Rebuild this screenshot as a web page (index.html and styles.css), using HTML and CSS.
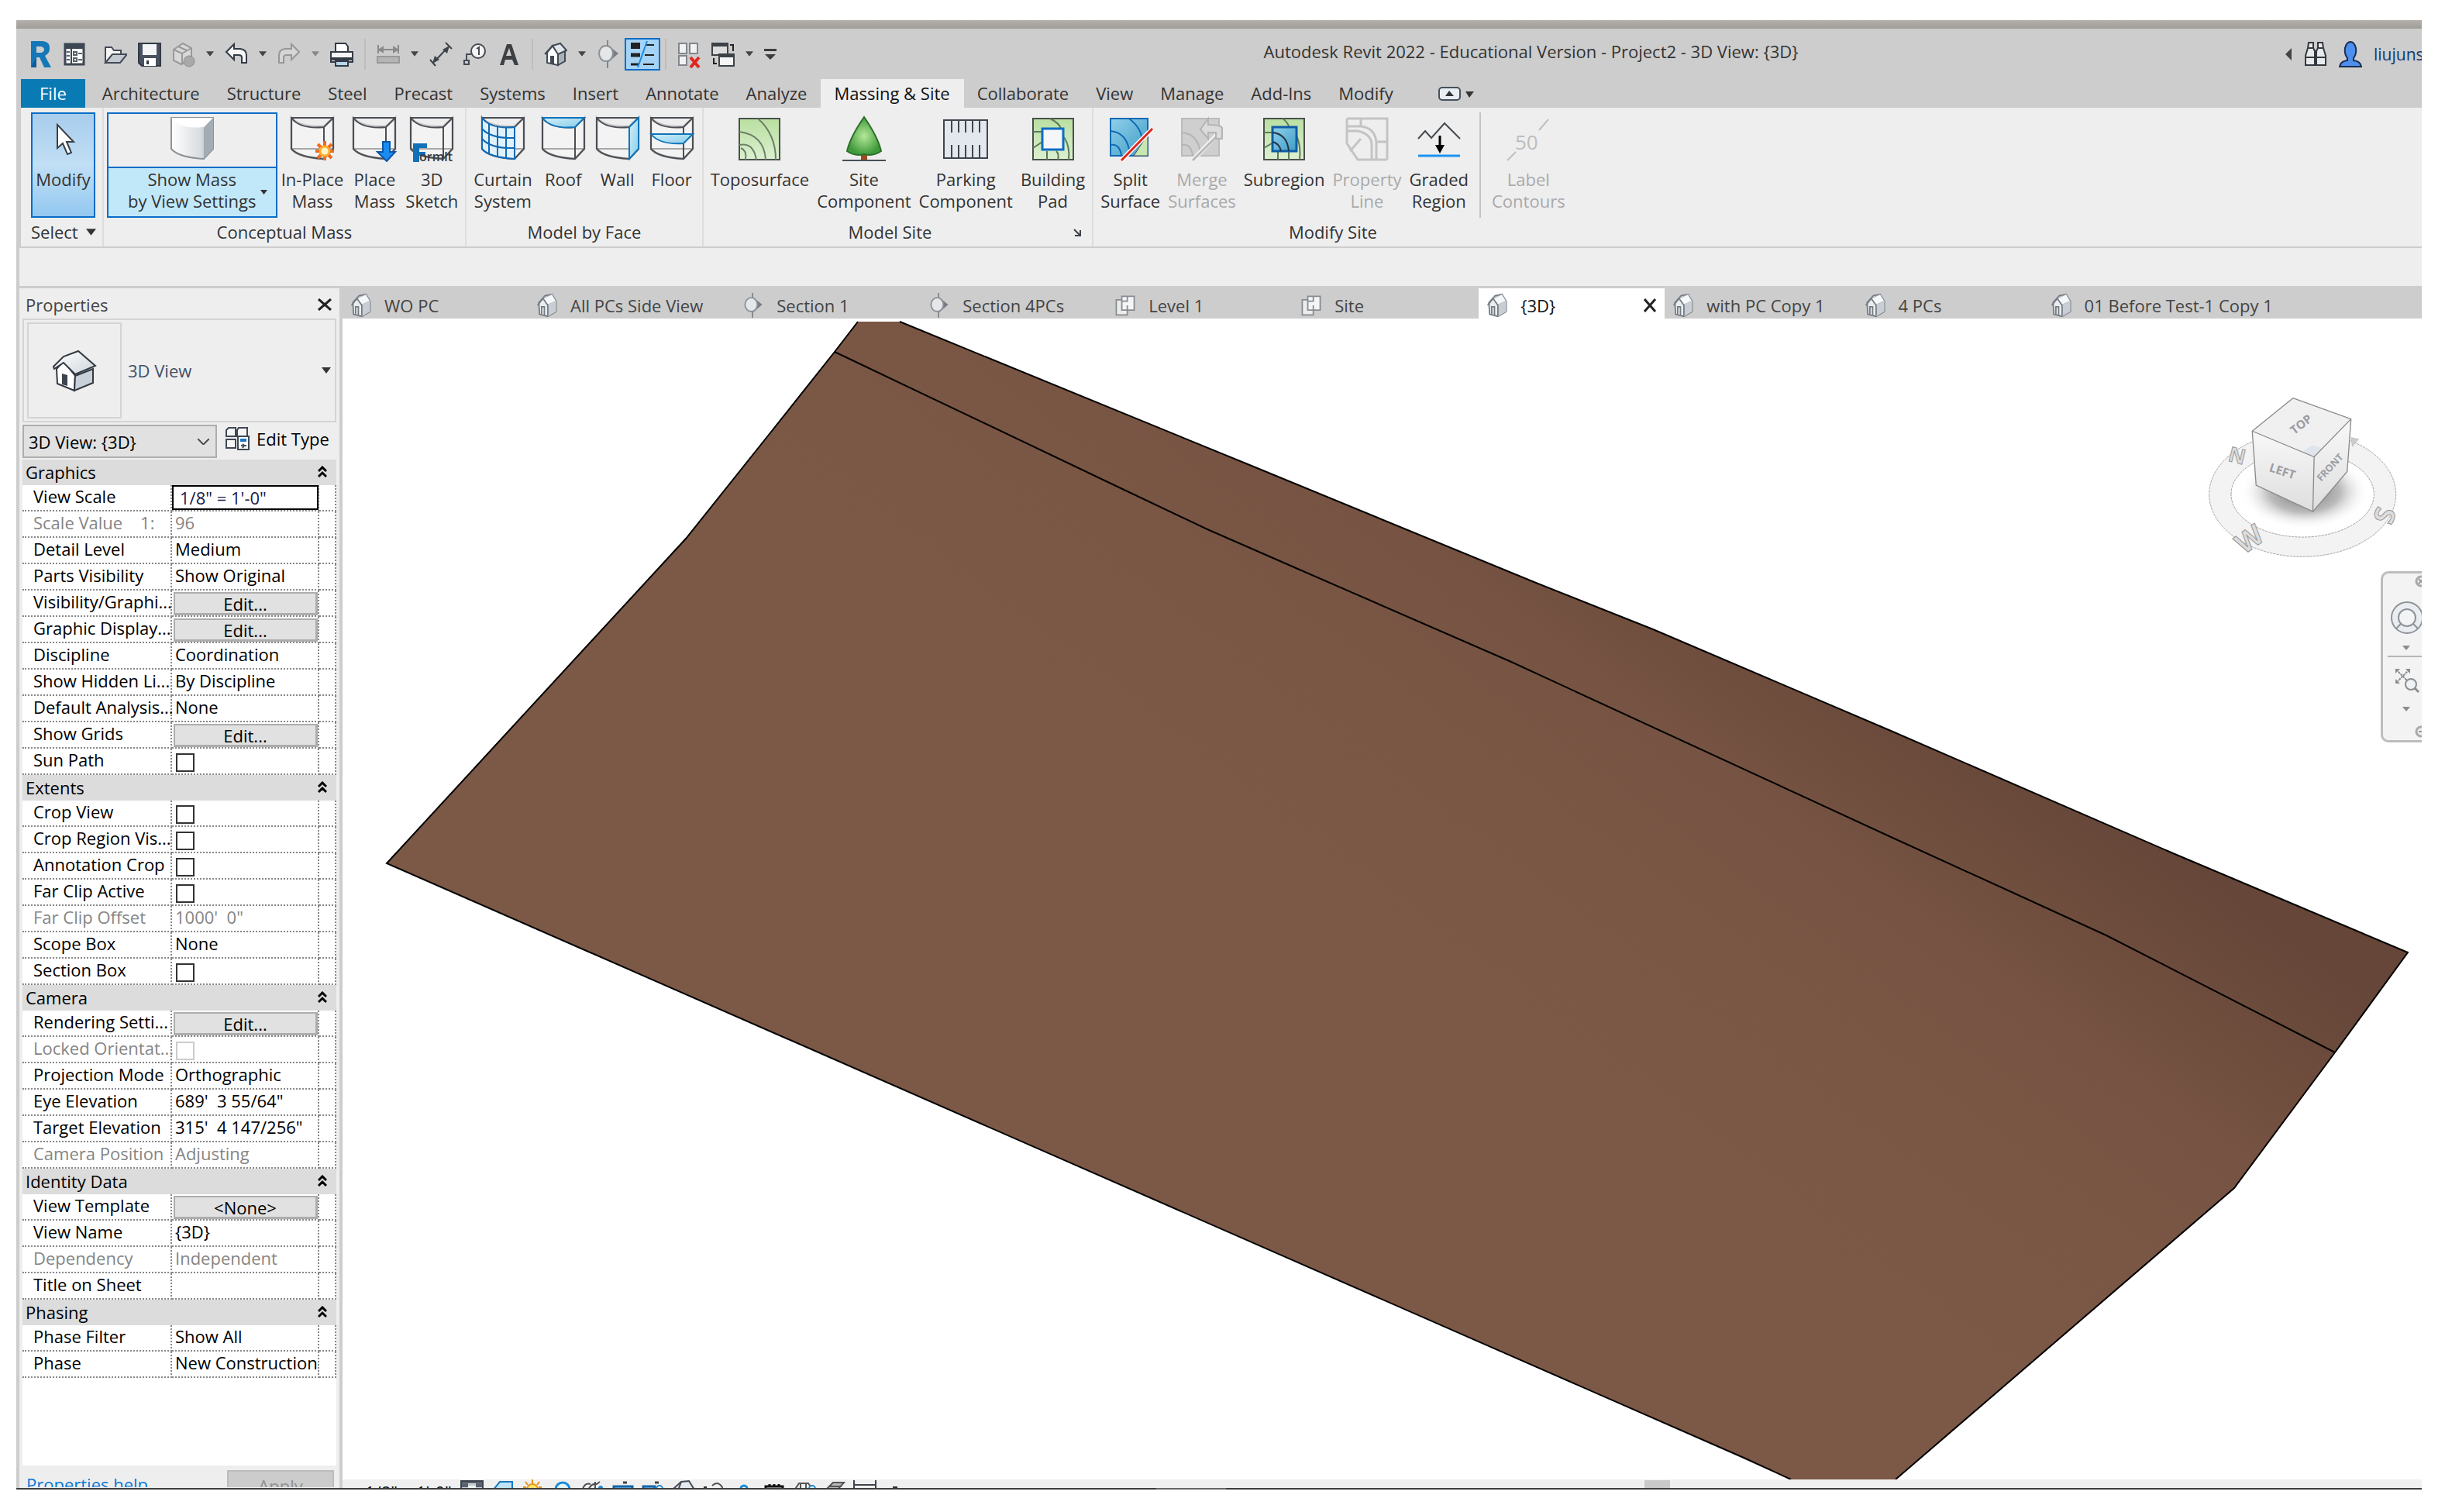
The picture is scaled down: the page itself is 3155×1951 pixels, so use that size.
FILE: index.html
```html
<!DOCTYPE html>
<html lang="en">
<head>
<meta charset="utf-8">
<title>Autodesk Revit 2022 - Educational Version - Project2 - 3D View: {3D}</title>
<link rel="stylesheet" href="styles.css">
</head>
<body>
<svg class="sprite" aria-hidden="true">
  <defs>
    <linearGradient id="g-roof" x1="0" y1="0" x2="1" y2="1"><stop offset="0" stop-color="#ffffff"/><stop offset="1" stop-color="#cfd6dc"/></linearGradient>
    <linearGradient id="g-solid" x1="0" y1="0" x2="1" y2="0"><stop offset="0" stop-color="#ffffff"/><stop offset=".7" stop-color="#d9dde0"/><stop offset="1" stop-color="#9aa3ac"/></linearGradient>
    <linearGradient id="g-sky" x1="0" y1="0" x2="1" y2="1"><stop offset="0" stop-color="#d3effa"/><stop offset="1" stop-color="#86cdea"/></linearGradient>
    <linearGradient id="g-green" x1="0" y1="0" x2="0" y2="1"><stop offset="0" stop-color="#b9dfa0"/><stop offset="1" stop-color="#dcf0d0"/></linearGradient>
    <linearGradient id="g-blue" x1="0" y1="0" x2="1" y2="1"><stop offset="0" stop-color="#8fd0ea"/><stop offset="1" stop-color="#3f9cc6"/></linearGradient>
    <radialGradient id="g-tree"><stop offset="0" stop-color="#b5e89a"/><stop offset="1" stop-color="#3f9a3a"/></radialGradient>
    <symbol id="i-house" viewBox="0 0 30 36">
      <path d="M3 14 12 4 22 2 28 12V27L16 34 4 31Z" fill="#e9edf0" stroke="#747b83" stroke-width="2"/>
      <path d="M9 8 22 2 28 12 16 17Z" fill="#f5f7f8" stroke="#9aa1a8"/>
      <path d="M16 17 28 12V27L16 34Z" fill="#c9ced4"/>
      <path d="M1 18 9 8 16 18V33M7 31V20h4V32" fill="none" stroke="#747b83" stroke-width="2"/>
    </symbol>
    <symbol id="i-section" viewBox="0 0 30 36">
      <path d="M14 0v36" stroke="#80868c" stroke-width="2"/><path d="M14 6 28 17 14 29Z" fill="#767d85"/>
      <ellipse cx="12" cy="17" rx="9" ry="10" fill="#e4e6e8" stroke="#8b9198" stroke-width="2"/>
    </symbol>
    <symbol id="i-plan" viewBox="0 0 30 36">
      <path d="M2 10h16V32H2Z" fill="#ececec" stroke="#858c93" stroke-width="2"/>
      <path d="M10 5h18V25H10Z" fill="#f5f5f5" stroke="#858c93" stroke-width="2"/><path d="M10 12h8v-7M18 25v-7" fill="none" stroke="#858c93" stroke-width="2"/>
    </symbol>
    <symbol id="i-mass" viewBox="0 0 60 60">
      <path d="M3 3Q14 16 45 14L57 3V43L45 56Q12 54 3 43Z" fill="#f3f3f3" stroke="#c8c8c8" stroke-width="3"/>
      <path d="M3 43H57" stroke="#a8a8a8" stroke-width="2"/>
      <path d="M3 3H57V43L45 56Q12 54 3 43ZM3 3Q14 18 45 15L57 3M45 15V56" fill="none" stroke="#4b4f54" stroke-width="2"/>
    </symbol>
    <symbol id="i-chev" viewBox="0 0 12 16"><path d="M1 7 6 2 11 7M1 14 6 9 11 14" fill="none" stroke="#000" stroke-width="3"/></symbol>
    <symbol id="i-down" viewBox="0 0 12 8"><path d="M0 0H12L6 8Z" fill="currentColor"/></symbol>
  </defs>
</svg>

<div class="app">
  <div class="frame-top"></div>
  <header class="titlebar">
    <div class="qat">
      <svg class="ico" viewBox="0 0 30 36"><path d="M3 1H18Q28 2 27 11 27 17 21 20L29 35H20L14 22H10V35H3Z" fill="#1478b8"/><path d="M10 8h6q4 1 4 4t-4 4h-6Z" fill="#cdcdcd"/><path d="M10 22 3 35h7Z" fill="#0d5b94"/></svg>
      <button class="tool" aria-label="Home"><svg class="ico" viewBox="0 0 30 36"><path d="M3 5H27V31H3Z" fill="#fff" stroke="#3d4752" stroke-width="3"/><path d="M3 5H27V11H3Z" fill="#3d4752"/><path d="M11 11V31" stroke="#3d4752" stroke-width="2"/><path d="M5 15h4M5 20h4M5 25h4M14 15h4v4h-4ZM14 23h4v4h-4ZM20 17h5M20 25h5" stroke="#56616c" stroke-width="2" fill="none"/></svg></button>
      <button class="tool tool-first" aria-label="Open"><svg class="ico" viewBox="0 0 30 36"><path d="M2 29V9H10L13 13H22V18" fill="#f4f4f4" stroke="#424a55" stroke-width="2"/><path d="M2 29 11 18H30L21 29Z" fill="#c3cad2" stroke="#424a55" stroke-width="2"/></svg></button>
      <button class="tool" aria-label="Save"><svg class="ico" viewBox="0 0 30 36"><path d="M1 4H29V33H5L1 29Z" fill="#4a525f" stroke="#333a45" stroke-width="2"/><path d="M6 5H24V19H6Z" fill="#f4f5f7"/><path d="M8 23H23V33H8Z" fill="#fff"/><path d="M11 26h3v5h-3Z" fill="#333a45"/></svg></button>
      <button class="tool" aria-label="Synchronize"><svg class="ico" viewBox="0 0 30 36"><path d="M2 12 14 4 25 10V24L12 31 2 26Z" fill="#d8d8d8" stroke="#999" stroke-width="2"/><path d="M2 12 13 17 25 10M13 17V31M8 8 19 13" fill="none" stroke="#999" stroke-width="2"/><circle cx="22" cy="27" r="7" fill="#a9a9a9" stroke="#8e8e8e"/></svg></button>
      <svg class="caret"><use href="#i-down"/></svg>
      <button class="tool" aria-label="Undo"><svg class="ico" viewBox="0 0 30 36"><path d="M2 15 12 5V11H20Q28 12 28 19V29H22V22Q22 19 18 19H12V25Z" fill="#f6f6f6" stroke="#333b45" stroke-width="2"/></svg></button>
      <svg class="caret"><use href="#i-down"/></svg>
      <button class="tool" aria-label="Redo"><svg class="ico" viewBox="0 0 30 36"><path d="M28 15 18 5V11H10Q2 12 2 19V29H8V22Q8 19 12 19H18V25Z" fill="#d5d5d5" stroke="#979797" stroke-width="2"/></svg></button>
      <svg class="caret dim"><use href="#i-down"/></svg>
      <button class="tool" aria-label="Print"><svg class="ico" viewBox="0 0 30 36"><path d="M7 4H20L23 8V15H7Z" fill="#fff" stroke="#333b45" stroke-width="2"/><path d="M1 15H29V28H1Z" fill="#f5f5f5" stroke="#333b45" stroke-width="2"/><path d="M1 22H29V26H1Z" fill="#333b45"/><path d="M7 27H23V33H7Z" fill="#b9d6e8" stroke="#333b45" stroke-width="2"/></svg></button>
      <span class="sep"></span>
      <button class="tool" aria-label="Measure"><svg class="ico" viewBox="0 0 30 36"><path d="M2 6V17M28 6V17M3 12H27M3 12l5-3v6ZM27 12l-5-3v6Z" stroke="#8a8a8a" stroke-width="2" fill="#8a8a8a"/><path d="M1 21H29V29H1Z" fill="#b5b5b5" stroke="#999" stroke-width="2"/></svg></button>
      <svg class="caret"><use href="#i-down"/></svg>
      <button class="tool" aria-label="Aligned Dimension"><svg class="ico" viewBox="0 0 30 36"><path d="M6 28 24 9M1 25 8 33M21 3 29 11" stroke="#3d434b" stroke-width="2"/><path d="M4 30 7 20 13 25ZM26 7 17 12 23 17Z" fill="#3d434b"/></svg></button>
      <button class="tool" aria-label="Tag by Category"><svg class="ico" viewBox="0 0 30 36"><circle cx="19" cy="14" r="9" fill="#f4f4f4" stroke="#444b54" stroke-width="2"/><path d="M17 11 20 9V19M10 18H4V26M1 26H7V31H1Z" fill="none" stroke="#444b54" stroke-width="2"/></svg></button>
      <button class="tool" aria-label="Text"><svg class="ico" viewBox="0 0 30 36"><path d="M3 32 12 5H18L27 32H22L19 25H10L8 32ZM11 20H18L15 10Z" fill="#3d4043" fill-rule="evenodd"/></svg></button>
      <span class="sep"></span>
      <button class="tool" aria-label="Default 3D View"><svg class="ico" viewBox="0 0 30 36"><path d="M4 16 11 7 18 17V32L4 29Z" fill="#fff" stroke="#414a55" stroke-width="2"/><path d="M18 17 27 13V27L18 32Z" fill="#a9b2bc" stroke="#414a55" stroke-width="2"/><path d="M11 7 21 4 29 13 18 18Z" fill="#e1e6eb" stroke="#414a55" stroke-width="2"/><path d="M1 18 11 7" stroke="#414a55" stroke-width="2"/><path d="M8 20h5v10h-5Z" fill="#414a55"/></svg></button>
      <svg class="caret"><use href="#i-down"/></svg>
      <button class="tool" aria-label="Section"><svg class="ico"><use href="#i-section"/></svg></button>
      <button class="tool tool-on" aria-label="Thin Lines" aria-pressed="true"><svg class="ico" viewBox="0 0 30 36"><path d="M0 7H12" stroke="#222" stroke-width="8"/><path d="M0 19H12" stroke="#222" stroke-width="5"/><path d="M0 31H10" stroke="#222" stroke-width="3"/><path d="M20 6H30M18 19H30M16 31H30" stroke="#222" stroke-width="2"/><path d="M21 1 9 35" stroke="#1c8ae0" stroke-width="2"/></svg></button>
      <span class="sep"></span>
      <button class="tool" aria-label="Close Inactive Views"><svg class="ico" viewBox="0 0 30 36"><path d="M2 4H12V17H2ZM16 4H26V17H16ZM2 20H12V32H2Z" fill="#f2f2f2" stroke="#81868c" stroke-width="2"/><path d="M17 22 28 35M28 22 17 35" stroke="#e1281f" stroke-width="4"/></svg></button>
      <button class="tool" aria-label="Switch Windows"><svg class="ico" viewBox="0 0 30 36"><path d="M1 4H21V19H1Z" fill="#ddd" stroke="#3d4248" stroke-width="2"/><path d="M1 6H21" stroke="#3d4248" stroke-width="4"/><path d="M10 18H29V33H10Z" fill="#f5f5f5" stroke="#3d4248" stroke-width="2"/><path d="M10 20H29" stroke="#3d4248" stroke-width="4"/><path d="M24 6H28V14M3 23V30H7" stroke="#222" stroke-width="2" fill="none"/></svg></button>
      <svg class="caret"><use href="#i-down"/></svg>
      <button class="tool tool-small" aria-label="Customize Quick Access Toolbar"><svg viewBox="0 0 16 16"><path d="M0 1H16V4H0ZM1 8H15L8 15Z" fill="#3d3d3d"/></svg></button>
    </div>
    <h1 class="title">Autodesk Revit 2022 - Educational Version - Project2 - 3D View: {3D}</h1>
    <div class="account">
      <svg class="back" viewBox="0 0 8 16"><path d="M8 0V16L0 8Z" fill="#444"/></svg>
      <button class="tool" aria-label="Search"><svg class="ico" viewBox="0 0 30 36"><path d="M6 3H12V10L14 14V32H2V20L5 10ZM24 3H18V10L16 14V32H28V20L25 10Z" fill="#e8eaec" stroke="#34393f" stroke-width="2"/><path d="M2 22H13M17 22H28M6 10h5M19 10h5M13 14h4" stroke="#34393f" stroke-width="2"/></svg></button>
      <button class="tool" aria-label="Account"><svg class="ico" viewBox="0 0 30 36"><path d="M1 34Q2 27 11 26V23Q7 18 8 10 10 2 15 2T22 10Q23 18 19 23V26Q28 27 29 34Z" fill="#4d8fec" stroke="#1b2c52" stroke-width="2"/></svg></button>
      <span class="user">liujuns</span>
    </div>
  </header>

  <nav class="tabs">
    <button class="tab tab-file">File</button>
    <button class="tab">Architecture</button>
    <button class="tab">Structure</button>
    <button class="tab">Steel</button>
    <button class="tab">Precast</button>
    <button class="tab">Systems</button>
    <button class="tab">Insert</button>
    <button class="tab">Annotate</button>
    <button class="tab">Analyze</button>
    <button class="tab tab-active">Massing &amp; Site</button>
    <button class="tab">Collaborate</button>
    <button class="tab">View</button>
    <button class="tab">Manage</button>
    <button class="tab">Add-Ins</button>
    <button class="tab">Modify</button>
    <button class="tab-toggle" aria-label="Minimize ribbon"><svg viewBox="0 0 46 18"><rect x="1" y="1" width="27" height="16" rx="4" fill="#e9eef3" stroke="#47505a" stroke-width="2"/><path d="M9 12H20L14 5ZM35 6H46L40 14Z" fill="#333"/></svg></button>
  </nav>

  <section class="ribbon">
    <div class="group">
      <div class="cmds">
        <button class="cmd cmd-modify"><svg class="big" viewBox="0 0 60 60"><path d="M22 12V42L29 36 35 50 40 48 34 34H43Z" fill="#fff" stroke="#3a4046" stroke-width="2"/></svg><span>Modify</span></button>
      </div>
      <button class="gname">Select <svg class="gcaret"><use href="#i-down"/></svg></button>
    </div>
    <div class="group">
      <div class="cmds">
        <button class="cmd cmd-show"><span class="show-top"><svg class="big" viewBox="0 0 60 60"><path d="M3 3H57V43L45 56Q12 54 3 43Z" fill="url(#g-solid)" stroke="#8d9299" stroke-width="2"/><path d="M45 16 57 3V43L45 56Z" fill="#a3abb3"/><path d="M3 3Q14 18 45 15L57 3Z" fill="#fff"/></svg></span><span class="show-label">Show Mass<br>by View Settings</span><svg class="show-caret"><use href="#i-down"/></svg></button>
        <button class="cmd"><svg class="big" viewBox="0 0 60 60"><use href="#i-mass"/><path d="M46 33V58M34 46H58M37 37 55 55M55 37 37 55" stroke="#f26a1b" stroke-width="4"/><circle cx="46" cy="46" r="6" fill="#fff6c8" stroke="#ffab2e" stroke-width="3"/></svg><span>In-Place<br>Mass</span></button>
        <button class="cmd"><svg class="big" viewBox="0 0 60 60"><use href="#i-mass"/><path d="M41 34H50V47H57L46 59 34 47H41Z" fill="#1c8df0" stroke="#0c56a8" stroke-width="2"/></svg><span>Place<br>Mass</span></button>
        <button class="cmd"><svg class="big" viewBox="0 0 60 60"><use href="#i-mass"/><path d="M6 36H24V42H14V47H22V52H14V60H6Z" fill="#1170b8"/><text x="14" y="59" class="formit">ormIt</text></svg><span>3D<br>Sketch</span></button>
      </div>
      <h2 class="gname">Conceptual Mass</h2>
    </div>
    <div class="group">
      <div class="cmds">
        <button class="cmd"><svg class="big" viewBox="0 0 60 60"><use href="#i-mass"/><path d="M3 3Q14 18 45 15V56Q12 54 3 43Z" fill="#dff2fb" stroke="#1169b5" stroke-width="2"/><path d="M3 17Q14 30 45 29M3 30Q14 43 45 42M12 11V50M23 15V54M34 15V55" fill="none" stroke="#1169b5" stroke-width="2"/></svg><span>Curtain<br>System</span></button>
        <button class="cmd"><svg class="big" viewBox="0 0 60 60"><use href="#i-mass"/><path d="M3 3H57L45 15Q14 18 3 3Z" fill="url(#g-sky)" stroke="#1273b8" stroke-width="2"/></svg><span>Roof</span></button>
        <button class="cmd"><svg class="big" viewBox="0 0 60 60"><use href="#i-mass"/><path d="M45 15 57 3V43L45 56Z" fill="url(#g-sky)" stroke="#1273b8" stroke-width="2"/></svg><span>Wall</span></button>
        <button class="cmd"><svg class="big" viewBox="0 0 60 60"><use href="#i-mass"/><path d="M3 24H57L45 36Q14 38 3 24Z" fill="url(#g-sky)" stroke="#1273b8" stroke-width="2"/></svg><span>Floor</span></button>
      </div>
      <h2 class="gname">Model by Face</h2>
    </div>
    <div class="group">
      <div class="cmds">
        <button class="cmd"><svg class="big" viewBox="0 0 60 60"><path d="M4 4H56V57H4Z" fill="url(#g-green)" stroke="#49504c" stroke-width="2"/><path d="M28 4Q51 24 51 57M4 21Q36 25 38 57M4 38Q22 34 26 57M12 57Q14 45 6 42" fill="none" stroke="#6d7f68" stroke-width="2"/></svg><span>Toposurface</span></button>
        <button class="cmd"><svg class="big" viewBox="0 0 60 60"><path d="M26 48H34V58H26Z" fill="#9c4d1e"/><path d="M2 58H58" stroke="#4a4f55" stroke-width="2"/><path d="M30 2Q48 28 52 46 42 53 30 50 18 53 8 46 12 28 30 2Z" fill="url(#g-tree)" stroke="#2c6e2b" stroke-width="2"/></svg><span>Site<br>Component</span></button>
        <button class="cmd"><svg class="big" viewBox="0 0 60 60"><path d="M2 6H58V55H2Z" fill="#e3e7ee" stroke="#3f454c" stroke-width="2"/><path d="M12 7V22M21 7V22M30 7V22M39 7V22M48 7V22M12 55V38M21 55V38M30 55V38M39 55V38M48 55V38" stroke="#3f454c" stroke-width="2"/></svg><span>Parking<br>Component</span></button>
        <button class="cmd"><svg class="big" viewBox="0 0 60 60"><path d="M4 4H56V57H4Z" fill="url(#g-green)" stroke="#49504c" stroke-width="2"/><path d="M26 4Q38 10 40 17M4 21H16M4 42 16 34M22 57V46M36 57Q38 50 34 46M50 57Q52 40 44 28" fill="none" stroke="#5c7a58" stroke-width="2"/><path d="M16 17H43V44H16Z" fill="#f4f6f8" stroke="#0f6cc4" stroke-width="3"/></svg><span>Building<br>Pad</span></button>
      </div>
      <div class="gfoot"><h2 class="gname">Model Site</h2><button class="launch" aria-label="Model Site settings"><svg viewBox="0 0 10 10"><path d="M1 1 8 8M9 2V9H2" stroke="#3c4249" stroke-width="2" fill="none"/></svg></button></div>
    </div>
    <div class="group group-last">
      <div class="cmds">
        <button class="cmd"><svg class="big" viewBox="0 0 60 60"><path d="M4 4H52V52H4Z" fill="url(#g-blue)" stroke="#1169b5" stroke-width="2"/><path d="M52 24 34 52H52Z" fill="#c7e6b2" stroke="#49504c"/><path d="M28 4Q46 18 44 34M4 20Q26 22 29 50M4 38Q16 36 18 52" fill="none" stroke="#1169b5" stroke-width="2"/><path d="M58 17 18 58" stroke="#fff" stroke-width="6"/><path d="M58 17 18 58" stroke="#e0251b" stroke-width="3"/></svg><span>Split<br>Surface</span></button>
        <button class="cmd" disabled><svg class="big" viewBox="0 0 60 60"><path d="M4 4H52V52H4Z" fill="#cfcfcf" stroke="#bbb" stroke-width="2"/><path d="M4 22Q26 24 28 50M4 38Q16 36 18 52" fill="none" stroke="#b4b4b4" stroke-width="2"/><path d="M54 20 18 58" stroke="#f2f2f2" stroke-width="6"/><path d="M54 22 18 58" stroke="#b9b9b9" stroke-width="3"/><path d="M38 4 28 18 38 30V22H48V30H56V16Q54 12 38 12Z" fill="#dcdcdc" stroke="#b4b4b4" stroke-width="2"/></svg><span>Merge<br>Surfaces</span></button>
        <button class="cmd"><svg class="big" viewBox="0 0 60 60"><path d="M4 4H56V57H4Z" fill="url(#g-green)" stroke="#49504c" stroke-width="2"/><path d="M28 4Q34 8 36 14M4 22H14M4 42 14 36M22 57V46M36 57V46M50 57Q52 40 46 26" fill="none" stroke="#5c7a58" stroke-width="2"/><path d="M15 15H46V46H15Z" fill="url(#g-blue)" stroke="#0f5ca8" stroke-width="3"/><path d="M15 22Q34 24 36 46M15 34Q24 36 26 46" fill="none" stroke="#234" stroke-width="2"/></svg><span>Subregion</span></button>
        <button class="cmd" disabled><svg class="big" viewBox="0 0 60 60"><path d="M4 4H56V57M4 4V36L18 57H56M22 4V14H4M22 4V14Q40 16 42 34H56M4 20H18Q36 24 36 38V57M42 34V57M8 46 22 30" fill="none" stroke="#c4c4c4" stroke-width="3"/></svg><span>Property<br>Line</span></button>
        <button class="cmd"><svg class="big" viewBox="0 0 60 60"><path d="M3 30 12 20 20 29 37 10 57 30" fill="none" stroke="#444a50" stroke-width="2"/><path d="M31 26V42" stroke="#000" stroke-width="3"/><path d="M25 38H37L31 49Z" fill="#000"/><path d="M3 52H57" stroke="#1c93f2" stroke-width="3"/></svg><span>Graded<br>Region</span></button>
        <span class="csep"></span>
        <button class="cmd" disabled><svg class="big" viewBox="0 0 60 60"><path d="M56 5 44 19M14 47 3 58" stroke="#c0c0c0" stroke-width="2"/><text x="13" y="44" class="fifty">50</text></svg><span>Label<br>Contours</span></button>
      </div>
      <h2 class="gname">Modify Site</h2>
    </div>
  </section>
  <div class="options"></div>

  <main class="work">
    <aside class="props">
      <div class="props-head"><h2>Properties</h2><button class="close" aria-label="Close Properties"><svg viewBox="0 0 18 16"><path d="M1 1 17 15M17 1 1 15" stroke="#222" stroke-width="3"/></svg></button></div>
      <button class="type">
        <span class="preview"><svg viewBox="0 0 60 60"><path d="M30 56 8 47 7 28 16 18 31 37Z" fill="#fff" stroke="#333a42" stroke-width="2"/><path d="M31 37 54 28V46L30 56Z" fill="#c8d0d8" stroke="#333a42" stroke-width="2"/><path d="M3 25 16 12 35 5 57 24 31 35 16 20 4 28Z" fill="url(#g-roof)" stroke="#333a42" stroke-width="2"/><path d="M14 34 21 36V50L14 48Z" fill="#3c4550"/></svg></span>
        <span class="type-name">3D View</span>
        <svg class="type-caret"><use href="#i-down"/></svg>
      </button>
      <div class="filter">
        <select class="view-select" aria-label="Properties filter"><option>3D View: {3D}</option></select>
        <button class="edit-type"><svg viewBox="0 0 32 30"><path d="M4 1H13V12H1V4ZM17 1H28V12H15V4ZM1 16H13V27H1Z" fill="#f6f6f6" stroke="#3f4853" stroke-width="2"/><path d="M16 12H30V29H16Z" fill="#fff" stroke="#3f4853" stroke-width="2"/><path d="M19 15H27V19H19Z" fill="#1b78c8"/><path d="M20 24h2M24 24h3M22 22l2 2-2 3" stroke="#3f4853" stroke-width="2" fill="none"/></svg>Edit Type</button>
      </div>
      <div class="grid">
      <table>
        <colgroup><col class="c-name"><col class="c-val"><col></colgroup>
        <tbody>
          <tr class="cat"><th colspan="3"><span>Graphics<svg><use href="#i-chev"/></svg></span></th></tr>
          <tr><th><label for="scale">View Scale</label></th><td><input id="scale" class="scale" type="text" value="1/8&quot; = 1'-0&quot;"></td><td></td></tr>
          <tr class="off"><th>Scale Value    1:</th><td>96</td><td></td></tr>
          <tr><th>Detail Level</th><td>Medium</td><td></td></tr>
          <tr><th>Parts Visibility</th><td>Show Original</td><td></td></tr>
          <tr><th><label for="vg">Visibility/Graphi...</label></th><td><button id="vg" class="edit">Edit...</button></td><td></td></tr>
          <tr><th><label for="gd">Graphic Display...</label></th><td><button id="gd" class="edit">Edit...</button></td><td></td></tr>
          <tr><th>Discipline</th><td>Coordination</td><td></td></tr>
          <tr><th>Show Hidden Li...</th><td>By Discipline</td><td></td></tr>
          <tr><th>Default Analysis...</th><td>None</td><td></td></tr>
          <tr><th><label for="sg">Show Grids</label></th><td><button id="sg" class="edit">Edit...</button></td><td></td></tr>
          <tr><th><label for="sun">Sun Path</label></th><td><input id="sun" type="checkbox"></td><td></td></tr>
        </tbody>
        <tbody>
          <tr class="cat"><th colspan="3"><span>Extents<svg><use href="#i-chev"/></svg></span></th></tr>
          <tr><th><label for="crop">Crop View</label></th><td><input id="crop" type="checkbox"></td><td></td></tr>
          <tr><th><label for="region">Crop Region Vis...</label></th><td><input id="region" type="checkbox"></td><td></td></tr>
          <tr><th><label for="anno">Annotation Crop</label></th><td><input id="anno" type="checkbox"></td><td></td></tr>
          <tr><th><label for="far">Far Clip Active</label></th><td><input id="far" type="checkbox"></td><td></td></tr>
          <tr class="off"><th>Far Clip Offset</th><td>1000'  0"</td><td></td></tr>
          <tr><th>Scope Box</th><td>None</td><td></td></tr>
          <tr><th><label for="sbox">Section Box</label></th><td><input id="sbox" type="checkbox"></td><td></td></tr>
        </tbody>
        <tbody>
          <tr class="cat"><th colspan="3"><span>Camera<svg><use href="#i-chev"/></svg></span></th></tr>
          <tr><th><label for="rs">Rendering Setti...</label></th><td><button id="rs" class="edit">Edit...</button></td><td></td></tr>
          <tr class="off"><th><label for="lock">Locked Orientat...</label></th><td><input id="lock" type="checkbox" disabled></td><td></td></tr>
          <tr><th>Projection Mode</th><td>Orthographic</td><td></td></tr>
          <tr><th>Eye Elevation</th><td>689'  3 55/64"</td><td></td></tr>
          <tr><th>Target Elevation</th><td>315'  4 147/256"</td><td></td></tr>
          <tr class="off"><th>Camera Position</th><td>Adjusting</td><td></td></tr>
        </tbody>
        <tbody>
          <tr class="cat"><th colspan="3"><span>Identity Data<svg><use href="#i-chev"/></svg></span></th></tr>
          <tr><th><label for="vt">View Template</label></th><td><button id="vt" class="edit">&lt;None&gt;</button></td><td></td></tr>
          <tr><th>View Name</th><td>{3D}</td><td></td></tr>
          <tr class="off"><th>Dependency</th><td>Independent</td><td></td></tr>
          <tr><th>Title on Sheet</th><td></td><td></td></tr>
        </tbody>
        <tbody>
          <tr class="cat"><th colspan="3"><span>Phasing<svg><use href="#i-chev"/></svg></span></th></tr>
          <tr><th>Phase Filter</th><td>Show All</td><td></td></tr>
          <tr><th>Phase</th><td>New Construction</td><td></td></tr>
        </tbody>
      </table>
      </div>
      <div class="props-foot"><a href="#help">Properties help</a><button class="apply" disabled>Apply</button></div>
    </aside>

    <section class="view">
      <div class="vtabs">
        <button class="vtab"><svg><use href="#i-house"/></svg>WO PC</button>
        <button class="vtab"><svg><use href="#i-house"/></svg>All PCs Side View</button>
        <button class="vtab"><svg><use href="#i-section"/></svg>Section 1</button>
        <button class="vtab"><svg><use href="#i-section"/></svg>Section 4PCs</button>
        <button class="vtab"><svg><use href="#i-plan"/></svg>Level 1</button>
        <button class="vtab"><svg><use href="#i-plan"/></svg>Site</button>
        <button class="vtab vtab-active"><svg><use href="#i-house"/></svg>{3D}<svg class="x" viewBox="0 0 18 18"><path d="M2 1 16 17M16 1 2 17" stroke="#222" stroke-width="3"/></svg></button>
        <button class="vtab"><svg><use href="#i-house"/></svg>with PC Copy 1</button>
        <button class="vtab"><svg><use href="#i-house"/></svg>4 PCs</button>
        <button class="vtab"><svg><use href="#i-house"/></svg>01 Before Test-1 Copy 1</button>
      </div>
      <div class="canvas">
        <svg class="model" viewBox="442 410 2683 1498" role="img" aria-label="Terrain surface">
          <defs>
            <linearGradient id="g-ground" gradientUnits="userSpaceOnUse" x1="60" y1="-80" x2="486" y2="-648"><stop offset="0" stop-color="#7c5847"/><stop offset=".35" stop-color="#7a5645"/><stop offset=".62" stop-color="#765342"/><stop offset="1" stop-color="#654638"/></linearGradient>
          </defs>
          <path d="M1107 414H1161L1615 600 1982 751 2133 811 2440 942 2804 1100 3107 1228 3013 1357 2883 1532 2446 1908H2311L2250 1880 499 1113 885 694 992 560 1077 453Z" fill="url(#g-ground)"/>
          <path d="M1161 414 1615 600 1982 751 2133 811 2440 942 2804 1100 3107 1228 3013 1357 2883 1532 2446 1908M2311 1908 2250 1880 499 1113 885 694 992 560 1077 453 1107 414M1077 453 1440 626 1558 682 1670 731 1950 853 2440 1079 2600 1152 2718 1206 3013 1357" fill="none" stroke="#000" stroke-width="2"/>
        </svg>
        <svg class="cube" viewBox="200 80 740 640" role="img" aria-label="View cube">
          <defs>
            <radialGradient id="g-shade"><stop offset="0" stop-color="#777"/><stop offset=".55" stop-color="#bbb"/><stop offset="1" stop-color="#fff" stop-opacity="0"/></radialGradient>
            <linearGradient id="g-face" x1="0" y1="0" x2="0" y2="1"><stop offset="0" stop-color="#f8f8f8"/><stop offset="1" stop-color="#dedede"/></linearGradient>
          </defs>
          <path d="M210 470a362 242 0 1 0 724 0a362 242 0 1 0-724 0ZM295 470a277 166 0 1 1 554 0a277 166 0 1 1-554 0Z" fill="#f3f3f3" fill-rule="evenodd" stroke="#a3a3a3" stroke-width="3" stroke-dasharray="10 3"/>
          <ellipse cx="580" cy="460" rx="250" ry="145" fill="url(#g-shade)"/>
          <text class="compass" transform="translate(280 340) rotate(14)">N</text>
          <text class="compass compass-w" transform="translate(345 705) rotate(-35)">W</text>
          <text class="compass compass-w" transform="translate(918 592) rotate(-72)">S</text>
          <path d="M760 250 790 256 765 285Z" fill="#ccc" stroke="#999"/>
          <path d="M535 97 760 178 617 325 377 225Z" fill="#f0f0f0"/>
          <path d="M377 225 617 325 612 537 392 435Z" fill="url(#g-face)"/>
          <path d="M617 325 760 178 745 382 612 537Z" fill="url(#g-face)"/>
          <path d="M570 305 610 280 650 292 617 325Z" fill="#dfe5ea"/>
          <path d="M535 97 760 178 745 382 612 537 392 435 377 225ZM377 225 617 325 760 178M617 325 612 537" fill="none" stroke="#8a8a8a" stroke-width="4"/>
          <text class="face" transform="translate(540 240) rotate(-38)">TOP</text>
          <text class="face" transform="translate(440 380) rotate(18)">LEFT</text>
          <text class="face face-s" transform="translate(644 422) rotate(-47)">FRONT</text>
        </svg>
        <div class="navbar">
          <svg viewBox="0 0 50 215" role="img" aria-label="Navigation bar"><circle cx="49" cy="10" r="6" fill="#eee" stroke="#aaa" stroke-width="3"/><path d="M46 7 52 13M52 7 46 13" stroke="#999" stroke-width="2"/>
            <circle cx="31" cy="57" r="20" fill="#e9edf1" stroke="#8e9399" stroke-width="2"/><circle cx="31" cy="57" r="11" fill="#f2f4f6" stroke="#8e9399" stroke-width="2"/><path d="M23 65 17 71M39 65 45 71" stroke="#8e9399" stroke-width="2"/>
            <path d="M25 93H35L30 99ZM25 172H35L30 178Z" fill="#8a8d92"/><path d="M6 107H50" stroke="#b5b5b5" stroke-width="2"/>
            <path d="M17 124 34 141M34 124 17 141" stroke="#8a8d92" stroke-width="2" stroke-dasharray="3 1"/><path d="M16 123h6l-6 6ZM35 123h-6l6 6ZM16 142h6l-6-6Z" fill="#8a8d92"/><circle cx="36" cy="143" r="7" fill="#eef2f4" stroke="#8a8d92" stroke-width="2"/><path d="M41 148 46 153" stroke="#8a8d92" stroke-width="3"/>
            <circle cx="49" cy="204" r="6" fill="#eee" stroke="#aaa" stroke-width="3"/><path d="M46 204H52" stroke="#999" stroke-width="2"/></svg>
        </div>
      </div>
      <div class="vbar">
        <span class="vscale">1/8" = 1'-0"</span>
        <div class="vicons">
          <svg viewBox="0 0 30 24"><path d="M1 2H29V22H1Z" fill="#c9ced6" stroke="#3d444e" stroke-width="2"/><path d="M1 3H29" stroke="#3d444e" stroke-width="3"/><path d="M10 8H20V14H10Z" fill="#eef0f3"/><path d="M2 5H10V10H2ZM20 5H28V10H20Z" fill="#59616c"/></svg>
          <svg viewBox="0 0 30 24"><path d="M3 14 12 3H28V14L20 22H3Z" fill="#bfe4f7" stroke="#1579c4" stroke-width="2"/></svg>
          <svg viewBox="0 0 30 24"><path d="M15 0V6M6 3 9 7M24 3 21 7M3 10H7M23 10H27" stroke="#e0911b" stroke-width="2"/><circle cx="15" cy="13" r="7" fill="#ffe66b" stroke="#e99b1c" stroke-width="2"/></svg>
          <svg viewBox="0 0 30 24"><circle cx="15" cy="13" r="9" fill="#e1f2fb" stroke="#1d8ad6" stroke-width="3"/></svg>
          <svg viewBox="0 0 30 24"><path d="M2 12Q5 4 12 6M10 12Q13 5 20 6L24 3M18 3V12" fill="none" stroke="#4a4f56" stroke-width="2"/><circle cx="25" cy="11" r="3" fill="#1d8ad6"/></svg>
          <svg viewBox="0 0 30 24"><path d="M15 4H20" stroke="#444" stroke-width="3"/><path d="M3 9H27V20H3Z" fill="#9cc9ea" stroke="#1266aa" stroke-width="3"/></svg>
          <svg viewBox="0 0 30 24"><path d="M17 4H22" stroke="#444" stroke-width="3"/><path d="M2 9H17V20H2Z" fill="#9cc9ea" stroke="#1266aa" stroke-width="3"/><circle cx="23" cy="12" r="4" fill="#fff" stroke="#1d8ad6" stroke-width="2"/></svg>
          <svg viewBox="0 0 30 24"><path d="M2 12 12 3 22 2 29 13 20 22H2Z" fill="#e6e9ed" stroke="#444b54" stroke-width="2"/><path d="M12 3 8 14" stroke="#444b54" stroke-width="2"/></svg>
          <svg viewBox="0 0 30 24"><path d="M13 8Q20 1 26 10V20" fill="none" stroke="#555" stroke-width="2"/><path d="M2 9h4v3H2Z" fill="#333"/></svg>
          <svg viewBox="0 0 30 24"><circle cx="15" cy="12" r="4" fill="#fff" stroke="#1d8ad6" stroke-width="3"/></svg>
          <svg viewBox="0 0 30 24"><path d="M4 12V9H26V14M9 6V10M15 6V10M21 6V10" fill="none" stroke="#111" stroke-width="3"/></svg>
          <svg viewBox="0 0 30 24"><path d="M2 14 8 5H20L25 12M10 5V16M17 5V16" fill="none" stroke="#555" stroke-width="2"/><circle cx="25" cy="12" r="4" fill="#fff" stroke="#1d8ad6" stroke-width="2"/></svg>
          <svg viewBox="0 0 30 24"><path d="M3 14 13 4H27L18 14ZM8 9H24" fill="#bbb" stroke="#555" stroke-width="2"/></svg>
          <svg viewBox="0 0 30 24"><path d="M1 1V14M29 1V14M1 7H29" stroke="#3d444e" stroke-width="2"/></svg>
          <svg viewBox="0 0 30 24"><path d="M12 9H18V14H12Z" fill="#333"/></svg>
        </div>
        <div class="hscroll"><span class="hthumb"></span></div>
      </div>
    </section>
  </main>
  <div class="frame-bottom"></div>
</div>
</body>
</html>
```
FILE: styles.css
```css
* { box-sizing: border-box; }
body {
  margin: 0;
  padding: 26px 30px 29px 21px;
  background: #fff;
  color: #333;
  font: 22px/28px "Open Sans", "Noto Sans", sans-serif;
}
button, input, select { font: inherit; color: inherit; margin: 0; }
button { padding: 0; border: 0; background: none; white-space: nowrap; }
h1, h2 { margin: 0; font-size: inherit; font-weight: 400; }
svg { display: block; flex: none; }
.sprite { position: absolute; width: 0; height: 0; }
.app { overflow: hidden; }

/* Title bar and quick access toolbar */
.frame-top { height: 11px; background: linear-gradient(#b5b0ac, #a09c98); }
.titlebar { display: flex; align-items: center; height: 65px; padding-left: 16px; background: #cdcdcd; }
.qat { display: flex; align-items: center; gap: 14px; }
.ico { width: 30px; height: 36px; }
.tool-first { margin-left: 9px; }
.tool-on { width: 46px; height: 42px; margin: 0 -8px; padding: 0 6px; border: 2px solid #0a6cc8; background: #a5d3f5; }
.tool-small svg { width: 16px; height: 16px; }
.caret { width: 10px; height: 7px; color: #444; }
.caret.dim { color: #888; }
.sep { width: 2px; height: 40px; background: #bdbdbd; }
.title { flex: 1; text-align: center; padding-bottom: 8px; white-space: nowrap; }
.account { display: flex; align-items: center; }
.back { width: 8px; height: 16px; margin-right: 16px; }
.account .tool { margin-right: 15px; }
.user { width: 62px; overflow: hidden; color: #123a6b; font-size: 21px; white-space: nowrap; }

/* Ribbon tabs */
.tabs { display: flex; height: 37px; padding-left: 6px; background: #cdcdcd; }
.tab { padding: 0 18px 2px 17px; }
.tab-file { margin-right: 5px; padding: 0 24px 2px; background: #0a7ab5; color: #fff; }
.tab-active { background: #eee; color: #111; }
.tab-toggle { margin-left: 40px; }
.tab-toggle svg { width: 46px; height: 18px; }

/* Ribbon */
.ribbon { display: flex; height: 181px; border-left: 6px solid #cdcdcd; border-bottom: 2px solid #cdcdcd; background: #eee; }
.group { display: flex; flex-direction: column; padding: 6px 4px 0; border-right: 2px solid #ddd; }
.group:first-child { padding: 6px 8px 0 13px; }
.group-last { border: 0; }
.cmds { display: flex; height: 136px; }
.cmd { display: flex; flex-direction: column; align-items: center; min-width: 70px; padding: 4px 5px 0; color: #333; }
.cmd > span { padding-top: 8px; }
.cmd:disabled { color: #a9a9a9; }
.big { width: 60px; height: 60px; }
.cmd-modify { width: 83px; border: 2px solid #0a6cc8; background: linear-gradient(#a8cdec, #c1dff5 50%, #93c8f0); padding-top: 2px; }
.cmd-show { position: relative; width: 220px; padding: 0; border: 2px solid #0a6cc8; background: #c1e8f9; }
.cmd > .show-top { display: flex; justify-content: center; width: 100%; height: 70px; padding: 2px 0 0; border-bottom: 2px solid #0a6cc8; background: #eee; }
.cmd > .show-label { padding-top: 0; }
.show-caret { position: absolute; right: 11px; bottom: 28px; width: 9px; height: 6px; }
.csep { width: 2px; margin: 0 9px; background: #c4c4c4; }
.gname { display: block; padding-top: 4px; text-align: center; }
button.gname { display: flex; align-items: center; gap: 10px; }
.gcaret { width: 13px; height: 9px; }
.gfoot { display: grid; grid-template-columns: 1fr 20px; align-items: center; }
.launch { padding-top: 6px; }
.launch svg { width: 10px; height: 10px; }
.formit { font: 600 16px "Open Sans", sans-serif; fill: #3a3a3a; }
.fifty { font: 26px "Open Sans", sans-serif; fill: #bdbdbd; }
.options { height: 52px; border-left: 4px solid #cdcdcd; border-bottom: 3px solid #cdcdcd; background: #eee; }

/* Work area */
.work { display: grid; grid-template-columns: 421px 1fr; }
.props { border: 4px solid #cdcdcd; border-top-width: 0; border-bottom: 0; padding: 0 4px; background: #eee; color: #000; }
.props-head { display: flex; align-items: center; justify-content: space-between; height: 39px; padding: 2px 6px 0 4px; color: #444; }
.props-head svg { width: 18px; height: 16px; }
.type { display: flex; align-items: center; width: 100%; height: 134px; padding: 4px; border: 2px solid #d4d4d4; color: #3f5068; }
.preview { display: grid; place-items: center; width: 122px; height: 124px; border: 2px solid #d4d4d4; }
.preview svg { width: 60px; height: 60px; }
.type-name { flex: 1; padding-left: 8px; text-align: left; }
.type-caret { width: 14px; height: 8px; color: #333; }
.filter { display: flex; align-items: flex-start; height: 48px; padding-top: 3px; }
.view-select {
  appearance: none; width: 251px; height: 43px; padding: 0 6px; border: 2px solid #adadad; border-radius: 0;
  background: linear-gradient(45deg, transparent 42%, #555 42%, #555 58%, transparent 58%) 224px 16px / 8px 8px no-repeat,
    linear-gradient(-45deg, transparent 42%, #555 42%, #555 58%, transparent 58%) 231px 16px / 8px 8px no-repeat, #e1e1e1;
}
.edit-type { display: flex; align-items: center; gap: 8px; height: 36px; padding-left: 11px; }
.edit-type svg { width: 32px; height: 30px; }

/* Property grid */
.grid { height: 1298px; background: #fff; }
.grid table { width: 100%; table-layout: fixed; border-collapse: separate; border-spacing: 0; }
.c-name { width: 193px; }
.c-val { width: 190px; }
.grid th, .grid td { height: 34px; padding: 0; border-right: 2px dotted #888; border-bottom: 2px dotted #888; line-height: 29px; font-weight: 400; text-align: left; vertical-align: top; white-space: pre; }
.grid th { padding-left: 14px; }
.grid td { padding-left: 4px; }
.grid .off { color: #858585; }
.grid .cat th { height: 33px; padding: 0 12px 0 4px; border: 0; background: #dcdcdc; }
.cat span { display: flex; align-items: center; justify-content: space-between; height: 32px; }
.cat svg { width: 12px; height: 16px; }
.grid label { display: block; }
.scale { display: block; width: 189px; height: 32px; margin-left: -4px; padding: 0 8px; border: 2px solid #000; border-radius: 0; background: #fff; color: #1a1a4a; }
.edit { display: block; width: 186px; height: 30px; margin: 2px 0 0 -2px; border: 2px solid #adadad; border-right-width: 3px; border-bottom-width: 3px; background: #e1e1e1; line-height: 24px; }
.grid input[type="checkbox"] { appearance: none; display: block; width: 24px; height: 24px; margin: 6px 0 0 1px; border: 2px solid #333; border-radius: 0; background: #fff; }
.grid input[type="checkbox"]:disabled { border-color: #ccc; }
.props-foot { display: flex; justify-content: space-between; height: 28px; padding: 6px 3px 0 5px; overflow: hidden; }
.props-foot a { color: #0a78d6; line-height: 36px; text-decoration: none; }
.apply { width: 138px; height: 40px; border: 2px solid #bcbcbc; background: #ccc; color: #909090; }

/* Drawing area */
.view { display: flex; flex-direction: column; min-width: 0; background: #fff; }
.vtabs { display: flex; height: 39px; background: #cdcdcd; }
.vtab { display: flex; align-items: center; min-width: 240px; padding: 4px 41px 0 10px; color: #444; }
.vtab svg { width: 28px; height: 32px; margin-right: 16px; }
.vtab-active { background: #fff; color: #111; padding-right: 10px; }
.vtab svg.x { width: 18px; height: 18px; margin: 0 0 0 auto; }
.canvas { position: relative; }
.model { width: 100%; height: auto; }
.cube { position: absolute; top: 97px; right: 31px; width: 247px; height: 213px; }
.face { font: 700 46px "Open Sans", sans-serif; fill: #9a9da3; }
.face-s { font-size: 38px; }
.compass { font: 700 80px "Open Sans", sans-serif; fill: #ddd; stroke: #999; stroke-width: 3px; }
.compass-w { font-size: 108px; }
.navbar { position: absolute; top: 326px; right: 0; width: 53px; height: 221px; border: 3px solid #bdbdbd; border-right: 0; border-radius: 10px 0 0 10px; background: #f3f3f3; overflow: hidden; }
.navbar svg { width: 50px; height: 215px; }
.vbar { display: flex; height: 11px; padding-left: 29px; background: #f0f0f0; overflow: hidden; }
.vscale { width: 123px; padding-top: 2px; color: #111; }
.vicons { display: flex; gap: 9px; }
.vicons svg { width: 30px; height: 24px; }
.hscroll { flex: 1; padding: 1px 0 0 952px; }
.hthumb { display: block; width: 33px; height: 10px; background: #c9c9c9; }
.frame-bottom { height: 2px; background: linear-gradient(90deg, #3d3d3d 0 1471px, #666 1471px 1561px, #3d3d3d 1561px); }
```
